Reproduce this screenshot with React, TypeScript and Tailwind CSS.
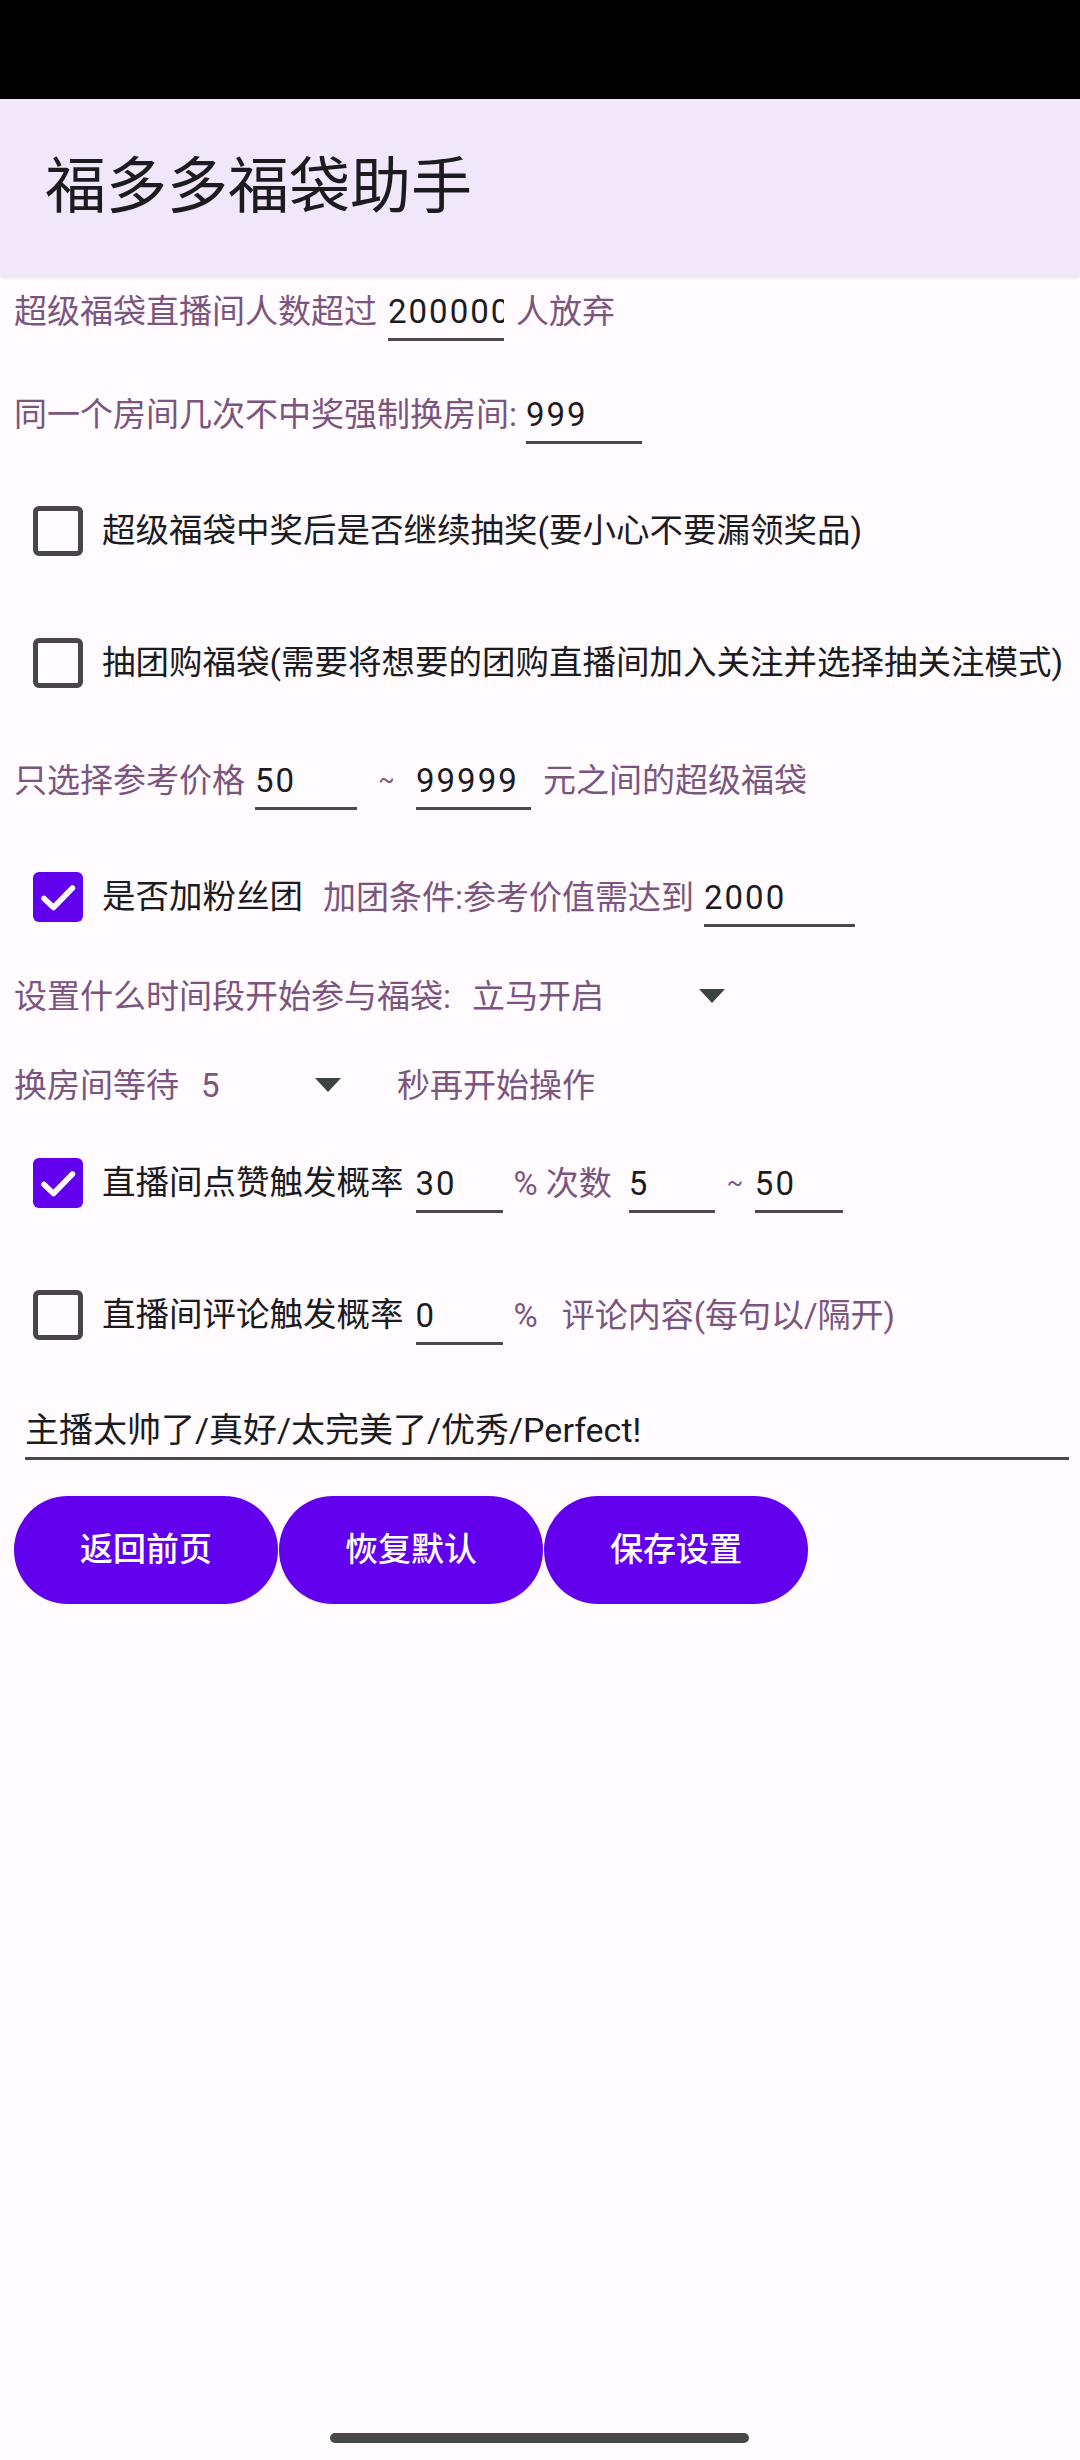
import clsx from "clsx";

const font = "font-['Roboto','Noto_Sans_CJK_SC',sans-serif]";

function Label({ children, className }: { children: React.ReactNode; className?: string }) {
  return (
    <span className={clsx("whitespace-nowrap text-[33px] leading-[33px] text-[#7c557e]", className)}>
      {children}
    </span>
  );
}

function Field({ value, className }: { value: string; className: string }) {
  return (
    <div
      className={clsx(
        "overflow-hidden whitespace-nowrap border-b-[3px] border-[#4b4850] pt-[13px] pb-[10px] text-[33px] leading-[33px] tracking-[2px] text-[#1c1b1f]",
        className
      )}
    >
      {value}
    </div>
  );
}

function Box({ checked }: { checked?: boolean }) {
  if (checked) {
    return (
      <div className="flex h-[50px] w-[50px] shrink-0 items-center justify-center rounded-[6px] bg-[#6200ee]">
        <svg width="50" height="50" viewBox="0 0 50 50">
          <path d="M11 26.5 L20.5 35.5 L39.5 16" fill="none" stroke="#fff" strokeWidth="5.5" strokeLinecap="round" strokeLinejoin="round" />
        </svg>
      </div>
    );
  }
  return <div className="h-[50px] w-[50px] shrink-0 rounded-[6px] border-[5.5px] border-[#49454f]" />;
}

function CheckLabel({ children }: { children: React.ReactNode }) {
  return <span className="ml-[19px] whitespace-nowrap text-[33.5px] leading-[34px] text-[#1c1b1f]">{children}</span>;
}

function Arrow() {
  return (
    <svg className="ml-auto shrink-0" width="26" height="14" viewBox="0 0 26 14">
      <polygon points="0,0 26,0 13,14" fill="#3d4245" />
    </svg>
  );
}

function Tilde({ className }: { className: string }) {
  return <span className={clsx("text-center text-[24px] leading-[33px] text-[#7c557e]", className)}>~</span>;
}

export default function App() {
  return (
    <div className={clsx("flex h-[2460px] w-[1080px] flex-col overflow-hidden bg-[#fffbfe]", font)}>
      {/* status bar */}
      <div className="h-[99px] shrink-0 bg-black" />

      {/* app bar */}
      <div className="relative z-10 flex h-[177px] shrink-0 items-center bg-[#f0e7fa] pl-[45px] shadow-[0_2px_4px_rgba(0,0,0,0.10)]">
        <span className="text-[61px] leading-[61px] text-[#1c1b1f]">福多多福袋助手</span>
      </div>

      {/* 人数 */}
      <div className="mt-[5px] flex h-[60px] items-center pl-[14px]">
        <Label>超级福袋直播间人数超过</Label>
        <Field value="200000" className="ml-[11px] w-[116px]" />
        <Label className="ml-[12px]">人放弃</Label>
      </div>

      {/* 换房间 */}
      <div className="mt-[43px] flex h-[60px] items-center pl-[14px]">
        <Label>同一个房间几次不中奖强制换房间:</Label>
        <Field value="999" className="ml-[9px] w-[116px]" />
      </div>

      <div className="mt-[57px] flex h-[60px] items-center pl-[33px]">
        <Box />
        <CheckLabel>超级福袋中奖后是否继续抽奖(要小心不要漏领奖品)</CheckLabel>
      </div>

      <div className="mt-[72px] flex h-[60px] items-center pl-[33px]">
        <Box />
        <CheckLabel>抽团购福袋(需要将想要的团购直播间加入关注并选择抽关注模式)</CheckLabel>
      </div>

      {/* 价格 */}
      <div className="mt-[57px] flex h-[60px] items-center pl-[14px]">
        <Label>只选择参考价格</Label>
        <Field value="50" className="ml-[10px] w-[102px]" />
        <Tilde className="w-[59px]" />
        <Field value="99999" className="w-[115px]" />
        <Label className="ml-[12px]">元之间的超级福袋</Label>
      </div>

      {/* 粉丝团 */}
      <div className="mt-[57px] flex h-[60px] items-center pl-[33px]">
        <Box checked />
        <CheckLabel>是否加粉丝团</CheckLabel>
        <Label className="ml-[20px]">加团条件:参考价值需达到</Label>
        <Field value="2000" className="ml-[10px] w-[151px]" />
      </div>

      {/* 时间段 */}
      <div className="mt-[39px] flex h-[60px] items-center pl-[14px]">
        <Label>设置什么时间段开始参与福袋:</Label>
        <div className="flex w-[274px] items-center pl-[21px]">
          <Label>立马开启</Label>
          <Arrow />
        </div>
      </div>

      {/* 等待 */}
      <div className="mt-[29px] flex h-[60px] items-center pl-[14px]">
        <Label>换房间等待</Label>
        <div className="flex w-[162px] items-center pl-[22px]">
          <Label>5</Label>
          <Arrow />
        </div>
        <Label className="ml-[56px]">秒再开始操作</Label>
      </div>

      {/* 点赞 */}
      <div className="mt-[38px] flex h-[60px] items-center pl-[33px]">
        <Box checked />
        <CheckLabel>直播间点赞触发概率</CheckLabel>
        <Field value="30" className="ml-[12px] w-[87px]" />
        <Label className="ml-[11px]">% 次数</Label>
        <Field value="5" className="ml-[17px] w-[86px]" />
        <Tilde className="w-[40px]" />
        <Field value="50" className="w-[88px]" />
      </div>

      {/* 评论 */}
      <div className="mt-[72px] flex h-[60px] items-center pl-[33px]">
        <Box />
        <CheckLabel>直播间评论触发概率</CheckLabel>
        <Field value="0" className="ml-[12px] w-[87px]" />
        <Label className="ml-[11px]">%</Label>
        <Label className="ml-[24px]">评论内容(每句以/隔开)</Label>
      </div>

      {/* 评论内容 */}
      <div className="mt-[55px] flex h-[60px] items-center pl-[25px]">
        <div className="w-[1044px] overflow-hidden whitespace-nowrap border-b-[3px] border-[#4b4850] pt-[13px] pb-[10px] text-[34px] leading-[34px] text-[#1c1b1f]">
          主播太帅了/真好/太完美了/优秀/Perfect!
        </div>
      </div>

      {/* 按钮 */}
      <div className="mt-[36px] flex gap-[1px] pl-[14px]">
        {["返回前页", "恢复默认", "保存设置"].map((t) => (
          <button
            key={t}
            className="flex h-[108px] w-[264px] items-center justify-center rounded-full bg-[#6200ee] text-[33px] font-medium text-white"
          >
            {t}
          </button>
        ))}
      </div>

      <div className="flex-1" />

      {/* gesture bar */}
      <div className="mb-[17px] ml-[330px] h-[10px] w-[419px] shrink-0 rounded-full bg-[#484848]" />
    </div>
  );
}
